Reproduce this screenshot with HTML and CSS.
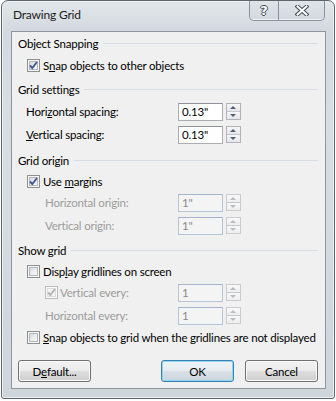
FILE: index.html
```html
<!DOCTYPE html>
<html lang="en">

<head>
    <meta charset="UTF-8">
    <title>Drawing Grid</title>
    <link rel="stylesheet" href="styles.css">
</head>

<body>
    <div class="window">
        <div class="titlebar">
            <span class="title">Drawing Grid</span>
            <div class="caption-buttons">
                <span class="cap-btn help">?</span>
                <span class="cap-btn close">
                    <svg width="14" height="11" viewBox="0 0 14 11">
                        <path d="M2.5 1.5 L11.5 9.5 M11.5 1.5 L2.5 9.5" stroke="#434b55" stroke-width="4" stroke-linecap="square" fill="none"/>
                        <path d="M2.5 1.5 L11.5 9.5 M11.5 1.5 L2.5 9.5" stroke="#ffffff" stroke-width="2" stroke-linecap="square" fill="none"/>
                    </svg>
                </span>
            </div>
        </div>

        <div class="client">
            <div class="group-head"><span>Object Snapping</span><i class="rule"></i></div>
            <div class="check-row first">
                <span class="checkbox"><svg width="11" height="11" viewBox="0 0 11 11"><path d="M2 5.5 L4.3 8 L9 2" class="tick"/></svg></span>
                <span>S<u>n</u>ap objects to other objects</span>
            </div>

            <div class="group-head gap3"><span>Grid settings</span><i class="rule"></i></div>
            <div class="field-row">
                <span class="field-label"><span>Hori<u>z</u>ontal spacing:</span></span>
                <span class="text-box">0.13"</span>
                <span class="spinner"><i class="up"></i><i class="down"></i></span>
            </div>
            <div class="field-row">
                <span class="field-label"><span><u>V</u>ertical spacing:</span></span>
                <span class="text-box">0.13"</span>
                <span class="spinner"><i class="up"></i><i class="down"></i></span>
            </div>

            <div class="group-head gap3"><span>Grid origin</span><i class="rule"></i></div>
            <div class="check-row">
                <span class="checkbox"><svg width="11" height="11" viewBox="0 0 11 11"><path d="M2 5.5 L4.3 8 L9 2" class="tick"/></svg></span>
                <span>Use <u>m</u>argins</span>
            </div>
            <div class="field-row disabled">
                <span class="field-label indent"><span>Horizontal origin:</span></span>
                <span class="text-box">1"</span>
                <span class="spinner"><i class="up"></i><i class="down"></i></span>
            </div>
            <div class="field-row disabled">
                <span class="field-label indent"><span>Vertical origin:</span></span>
                <span class="text-box">1"</span>
                <span class="spinner"><i class="up"></i><i class="down"></i></span>
            </div>

            <div class="group-head gap2"><span>Show grid</span><i class="rule"></i></div>
            <div class="check-row">
                <span class="checkbox empty"></span>
                <span>Disp<u>l</u>ay gridlines on screen</span>
            </div>
            <div class="field-row disabled">
                <span class="field-label indent">
                    <span class="checkbox dim"><svg width="11" height="11" viewBox="0 0 11 11"><path d="M2 5.5 L4.3 8 L9 2" class="tick"/></svg></span>
                    <span>Vertical every:</span>
                </span>
                <span class="text-box">1</span>
                <span class="spinner"><i class="up"></i><i class="down"></i></span>
            </div>
            <div class="field-row disabled">
                <span class="field-label indent"><span>Horizontal every:</span></span>
                <span class="text-box">1</span>
                <span class="spinner"><i class="up"></i><i class="down"></i></span>
            </div>
            <div class="check-row">
                <span class="checkbox empty"></span>
                <span><u>S</u>nap objects to grid when the gridlines are not displayed</span>
            </div>

            <div class="button-row">
                <span class="btn">D<u>e</u>fault...</span>
                <span class="btn default push">OK</span>
                <span class="btn">Cancel</span>
            </div>
        </div>
    </div>
</body>

</html>
```

FILE: styles.css
```css
body {
    margin: 0;
    background-color: #fff;
    font-family: Lato, "Open Sans", sans-serif;
    font-size: 11.5px;
    letter-spacing: -0.2px;
    color: #000;
}

.window {
    width: 334px;
    height: 399px;
    margin-left: 1px;
    box-sizing: border-box;
    border: 1px solid #5d646c;
    border-radius: 7px 7px 3px 3px;
    background: linear-gradient(to bottom, #e3e7eb 0, #d3d9df 28px, #d9dee3 120px, #cfd5db 100%);
    box-shadow: inset 0 0 0 1px #eef1f4;
    display: flex;
    flex-direction: column;
}

.titlebar {
    height: 30px;
    display: flex;
    align-items: flex-start;
    padding: 0 9px 0 11px;
}

.title {
    line-height: 28px;
    font-size: 12px;
    color: #1b1b1b;
    flex: 1;
}

.caption-buttons {
    display: flex;
    height: 19px;
    border: 1px solid #8a929b;
    border-top: none;
    border-radius: 0 0 5px 5px;
    background: linear-gradient(to bottom, #dfe4e9, #d2d8de);
    box-shadow: inset 0 -1px 0 #eef1f4;
}

.cap-btn {
    display: flex;
    align-items: center;
    justify-content: center;
}

.help {
    width: 28px;
    font-family: "DejaVu Sans", sans-serif;
    font-weight: bold;
    font-size: 13px;
    color: #fff;
    text-shadow: 1px 0 0 #434b55, -1px 0 0 #434b55, 0 1px 0 #434b55, 0 -1px 0 #434b55;
}

.close {
    width: 45px;
    border-left: 1px solid #8a929b;
}

.client {
    flex: 1;
    margin: 0 8px 9px 9px;
    border: 1px solid #8e959c;
    background-color: #f0f0f0;
    padding: 0 7px 0 6px;
}

u {
    text-decoration: underline;
    text-underline-offset: 1px;
}

.group-head {
    height: 22px;
    display: flex;
    align-items: center;
}

.group-head.gap3 {
    margin-top: 3px;
}

.group-head.gap2 {
    margin-top: 2px;
}

.rule {
    flex: 1;
    height: 1px;
    margin-left: 5px;
    background-color: #d7dde2;
}

.check-row {
    height: 20px;
    display: flex;
    align-items: center;
    padding-left: 9px;
    gap: 3px;
    white-space: nowrap;
}

.check-row.first {
    margin-top: 1px;
}

.checkbox {
    width: 13px;
    height: 13px;
    box-sizing: border-box;
    border: 1px solid #8e8f8f;
    background: linear-gradient(135deg, #cdd1d6 0%, #eceef0 55%, #ffffff 100%);
    box-shadow: inset 0 0 0 1px #f6f6f6, inset 0 0 0 2px #b4b8be;
    display: inline-flex;
    align-items: center;
    justify-content: center;
    flex: none;
}

.tick {
    fill: none;
    stroke: #3f5a92;
    stroke-width: 1.9;
}

.checkbox.dim {
    border-color: #bcbcbc;
    background: #f4f4f4;
    box-shadow: inset 0 0 0 1px #fafafa, inset 0 0 0 2px #dcdcdc;
}

.checkbox.dim .tick {
    stroke: #b3b3b3;
}

.field-row {
    height: 23px;
    display: flex;
    align-items: center;
}

.field-label {
    width: 160px;
    padding-left: 8px;
    box-sizing: border-box;
    display: flex;
    align-items: center;
    gap: 2px;
    white-space: nowrap;
}

.field-label.indent {
    padding-left: 27px;
}

.text-box {
    width: 45px;
    height: 18px;
    box-sizing: border-box;
    border: 1px solid #abadb3;
    border-top-color: #8e9298;
    background-color: #fff;
    padding-left: 3px;
    line-height: 16px;
}

.spinner {
    width: 15px;
    height: 17px;
    margin-left: 3px;
    box-sizing: border-box;
    border: 1px solid #b2b4b8;
    display: flex;
    flex-direction: column;
}

.spinner i {
    flex: 1;
    position: relative;
    background: linear-gradient(to bottom, #f7f7f7, #e4e6e8);
}

.spinner i.up {
    border-bottom: 1px solid #c4c7cb;
}

.spinner i::after {
    content: "";
    position: absolute;
    left: 3px;
    top: 2px;
    border-left: 3.5px solid transparent;
    border-right: 3.5px solid transparent;
}

.spinner i.up::after {
    border-bottom: 3px solid #4f5e72;
}

.spinner i.down::after {
    border-top: 3px solid #4f5e72;
}

.disabled {
    color: #9c9c9c;
}

.disabled .text-box {
    border-color: #b6c4d8;
    border-top-color: #a3b4cc;
    background-color: #f4f4f4;
    color: #8a8a8a;
}

.disabled .spinner {
    border-color: #c9cbce;
}

.disabled .spinner i {
    background: linear-gradient(to bottom, #f8f8f8, #eeeeee);
}

.disabled .spinner i.up::after {
    border-bottom-color: #b8bcc2;
}

.disabled .spinner i.down::after {
    border-top-color: #b8bcc2;
}

.button-row {
    display: flex;
    margin-top: 13px;
}

.btn {
    width: 73px;
    height: 22px;
    box-sizing: border-box;
    border: 1px solid #707070;
    border-radius: 3px;
    background: linear-gradient(to bottom, #f2f2f2 0%, #ebebeb 48%, #dddddd 52%, #cfcfcf 100%);
    box-shadow: inset 0 0 0 1px #fbfbfb;
    display: flex;
    align-items: center;
    justify-content: center;
}

.btn.default {
    border-color: #3c7fb1;
    box-shadow: inset 0 0 0 1px #8ed5f4;
    background: linear-gradient(to bottom, #eef3f6 0%, #e6ecf0 48%, #d9e1e7 52%, #ccd6de 100%);
}

.btn.push {
    margin-left: auto;
    margin-right: 11px;
}
```
